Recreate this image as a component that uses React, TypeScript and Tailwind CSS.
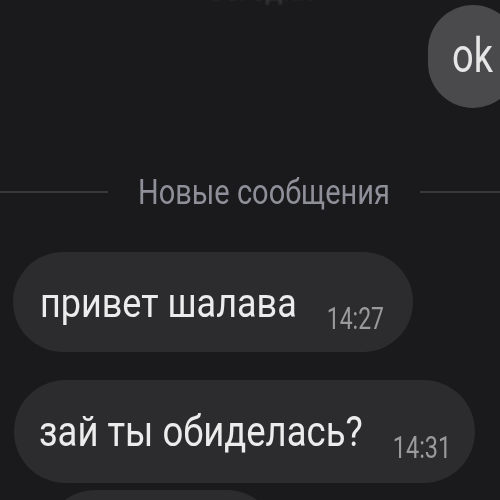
import React from "react";

export default function App() {
  return (
    <div
      className="w-[500px] h-[500px] overflow-hidden bg-[#1a1a1c] flex flex-col"
      style={{ fontFamily: "Roboto, 'Noto Sans', sans-serif" }}
    >
      <div className="h-[2px] shrink-0 flex justify-center">
        <span className="-mt-[26px] ml-[20px] text-[28px] leading-[34px] text-[#3a3a3e] blur-[1px]">Сегодня</span>
      </div>
      <div className="flex justify-end mt-[3px] shrink-0">
        <div className="h-[103px] w-[90px] -mr-[18px] rounded-l-full rounded-r-full bg-[#4a4a4c] flex items-center pl-[24px]">
          <span className="text-[38px] leading-none text-[#e6e6e6] -mt-[2px] scale-y-[1.25]">ok</span>
        </div>
      </div>
      <div className="flex items-center mt-[63px] shrink-0">
        <div className="w-[108px] h-[2px] bg-[#38383b] mt-[4px]" />
        <div className="flex-1 text-center text-[29px] leading-[34px] text-[#8e8f99] scale-y-[1.2] mt-[4px]">Новые сообщения</div>
        <div className="w-[80px] h-[2px] bg-[#38383b] mt-[4px]" />
      </div>
      <div className="flex flex-col items-start gap-[28px] mt-[43px] pl-[13px]">
        <div className="h-[100px] w-[400px] rounded-full bg-[#2c2c2e] flex items-center pl-[27px]">
          <span className="text-[36px] text-[#ececec] leading-none mt-[2px] scale-y-[1.15]">привет шалава</span>
          <span className="ml-[30px] mt-[32px] text-[23px] text-[#9a9a9c] leading-none scale-y-[1.35]">14:27</span>
        </div>
        <div className="h-[103px] w-[461px] ml-[1px] rounded-full bg-[#2c2c2e] flex items-center pl-[25px]">
          <span className="text-[36.5px] text-[#ececec] leading-none mt-[2px] scale-y-[1.15]">зай ты обиделась?</span>
          <span className="ml-[30px] mt-[32px] text-[23.5px] text-[#9a9a9c] leading-none scale-y-[1.35]">14:31</span>
        </div>
        <div className="h-[100px] w-[232px] ml-[32px] -mt-[21px] rounded-full bg-[#2c2c2e]" />
      </div>
    </div>
  );
}
